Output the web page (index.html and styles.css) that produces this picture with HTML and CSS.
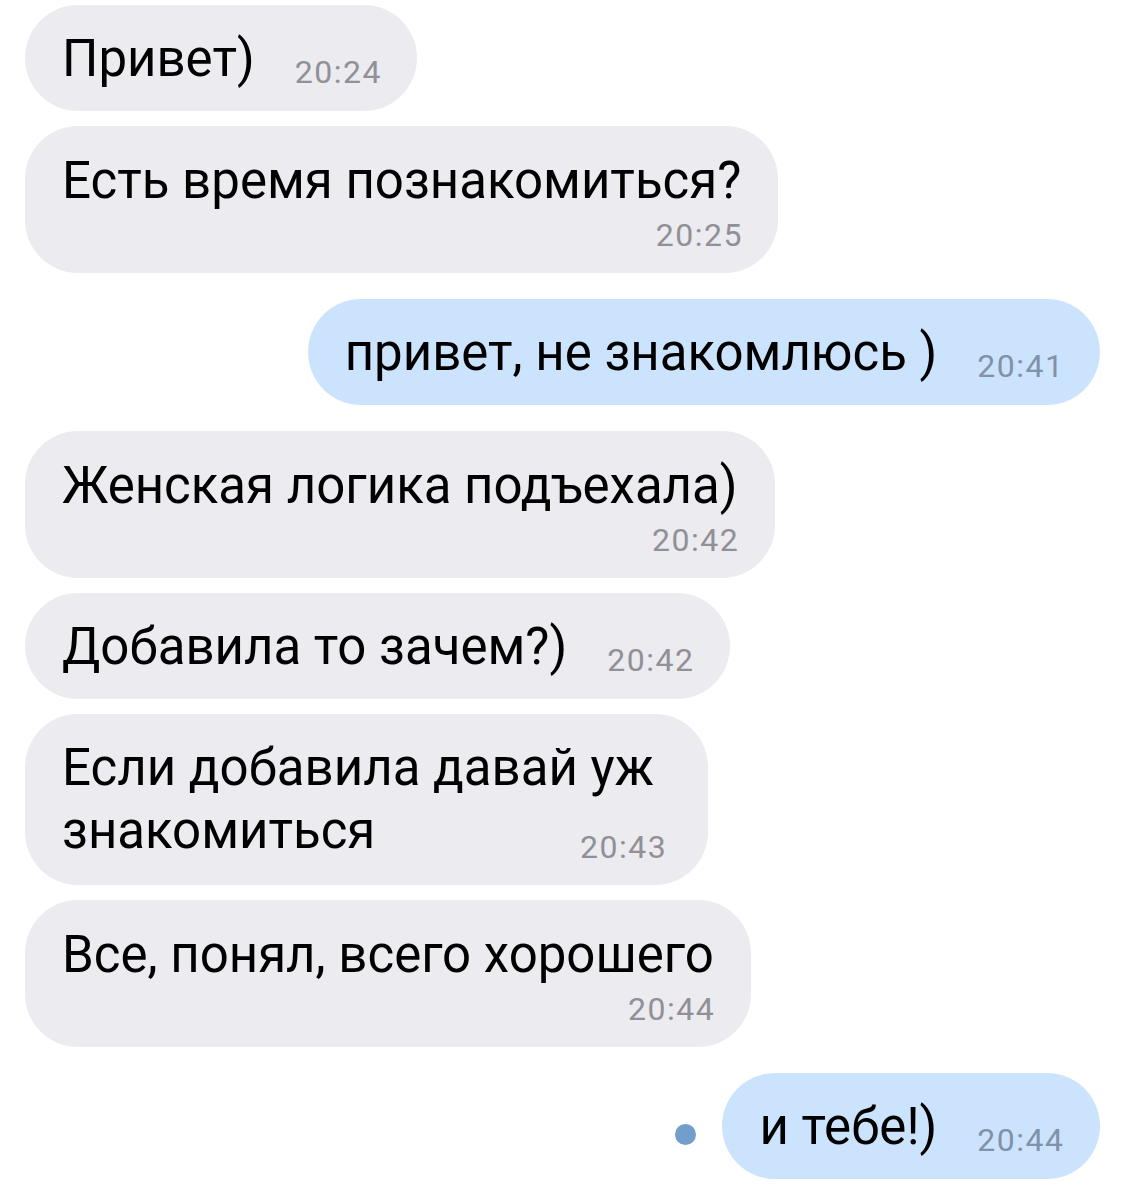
FILE: index.html
```html
<!DOCTYPE html>
<html lang="ru">
<head>
<meta charset="utf-8">
<link rel="stylesheet" href="styles.css">
</head>
<body>
<div class="chat">
  <div class="row in">
    <div class="bubble inline"><span class="text">Привет)</span><span class="time">20:24</span></div>
  </div>
  <div class="row in">
    <div class="bubble stacked"><div class="text">Есть время познакомиться?</div><div class="time">20:25</div></div>
  </div>
  <div class="row out gap-before">
    <div class="bubble inline"><span class="text">привет, не знакомлюсь )</span><span class="time">20:41</span></div>
  </div>
  <div class="row in gap-before">
    <div class="bubble stacked"><div class="text">Женская логика подъехала)</div><div class="time">20:42</div></div>
  </div>
  <div class="row in">
    <div class="bubble inline"><span class="text">Добавила то зачем?)</span><span class="time">20:42</span></div>
  </div>
  <div class="row in">
    <div class="bubble multi">
      <div class="line first">Если добавила давай уж</div>
      <div class="line last"><span>знакомиться</span><span class="time">20:43</span></div>
    </div>
  </div>
  <div class="row in">
    <div class="bubble stacked"><div class="text">Все, понял, всего хорошего</div><div class="time">20:44</div></div>
  </div>
  <div class="row out gap-before">
    <span class="unread"></span>
    <div class="bubble inline"><span class="text">и тебе!)</span><span class="time">20:44</span></div>
  </div>
</div>
</body>
</html>
```

FILE: styles.css
```css
html, body {
  margin: 0;
  padding: 0;
  background: #ffffff;
}

.chat {
  display: flex;
  flex-direction: column;
  gap: 15px;
  padding: 5px 25px 18px 25px;
  font-family: Roboto, "Liberation Sans", Arial, sans-serif;
  color: #000;
}

.row {
  display: flex;
  align-items: center;
}

.row.in { justify-content: flex-start; }
.row.out { justify-content: flex-end; }
.row.gap-before { margin-top: 11px; }

.bubble {
  background: #ebebf0;
  border-radius: 53px;
  padding: 24px 37px 21px 37px;
  font-size: 51px;
  line-height: 60px;
  white-space: nowrap;
  flex-shrink: 0;
}

.row.out .bubble {
  background: #cce3fd;
}

.time {
  font-size: 32px;
  line-height: 36px;
  letter-spacing: 1.5px;
  margin-right: -1.5px;
  color: #909096;
}

.row.out .time {
  color: #8191a8;
}

.bubble.inline .time {
  margin-left: 40px;
  vertical-align: -7px;
}

.bubble.stacked {
  display: flex;
  flex-direction: column;
  padding: 25px 37px 20px 37px;
}

.bubble.stacked .time {
  align-self: flex-end;
  margin-top: 6px;
}

.bubble.multi {
  display: flex;
  flex-direction: column;
  gap: 3px;
  padding: 24px 42px 20px 37px;
}

.line.first {
  padding-right: 12px;
}

.line.last {
  display: flex;
  justify-content: space-between;
  align-items: flex-start;
}

.line.last .time {
  margin-top: 28px;
}

.unread {
  width: 21px;
  height: 21px;
  border-radius: 50%;
  background: #739dcb;
  margin-right: 26px;
  margin-top: 16px;
  flex-shrink: 0;
}
```
